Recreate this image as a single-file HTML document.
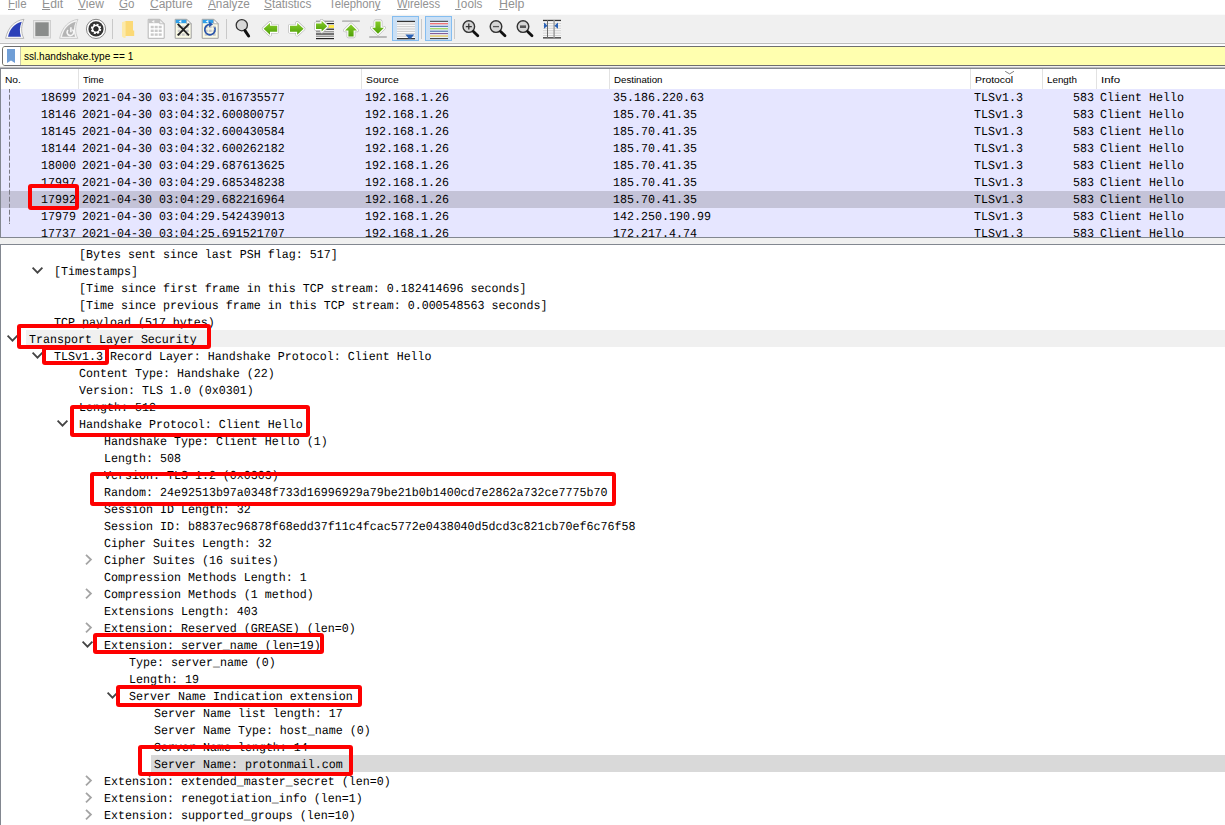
<!DOCTYPE html>
<html lang="en"><head><meta charset="utf-8"><title>Wireshark</title>
<style>
html,body{margin:0;padding:0;overflow:hidden;}
body{width:1225px;height:825px;overflow:hidden;background:#fff;position:relative;font-family:"Liberation Sans", "DejaVu Sans", sans-serif;}
.abs{position:absolute;}
#menubar{left:0;top:0;width:1225px;height:14px;background:#fff;overflow:hidden;}
#menubar span{position:absolute;top:-5px;font-size:12px;line-height:18px;color:#929292;white-space:nowrap;transform-origin:0 50%;}
#menubar u{text-decoration:underline;text-decoration-thickness:1px;text-underline-offset:1px;}
#toolbar{left:0;top:14px;width:1225px;height:32px;background:#f0f0f0;}
#filter{left:2px;top:46px;width:1226px;height:20px;background:#ffffaf;border:1px solid #6e6e6e;box-sizing:border-box;border-radius:3px;}
#filter .bm{position:absolute;left:0;top:0;width:17px;height:18px;background:#fff;border-right:1px solid #c6c6b0;border-radius:2px 0 0 2px;}
#filter .txt{position:absolute;left:21px;top:0;font-size:10px;line-height:19px;color:#000;white-space:nowrap;transform-origin:0 50%;}
#pborder{left:0;top:66px;width:1225px;height:3px;background:linear-gradient(#f0f0f0 0,#f0f0f0 1px,#bcbcbc 1px,#bcbcbc 2px,#828790 2px,#828790 3px);}
#plist{left:0;top:69px;width:1225px;height:169px;background:#e6e6ff;border-left:1px solid #828790;border-bottom:1px solid #828790;box-sizing:border-box;overflow:hidden;}
#phead{position:absolute;left:0;top:0;width:1224px;height:20px;background:#fff;}
#phead span{position:absolute;top:0;font-size:9.6px;line-height:21px;color:#000;white-space:nowrap;transform-origin:0 50%;}
#phead i{position:absolute;top:0;width:1px;height:20px;background:#e2e2e2;}
.prow{position:absolute;left:0;width:1224px;height:17px;font-family:"Liberation Mono", "DejaVu Sans Mono", monospace;font-size:12.2px;line-height:17px;color:#000;white-space:pre;text-rendering:geometricPrecision;}
.prow span{position:absolute;top:1px;transform:scaleX(0.9561);transform-origin:0 50%;}
.prow.sel{background:#c4c3d8;}
#split{left:0;top:238px;width:1225px;height:6px;background:#f0f0f0;}
#details{left:0;top:244px;width:1225px;height:581px;background:#fff;border-left:1px solid #828790;border-top:1px solid #828790;box-sizing:border-box;overflow:hidden;}
.drow{position:absolute;left:0;width:1224px;height:17px;font-family:"Liberation Mono", "DejaVu Sans Mono", monospace;font-size:12.2px;line-height:17px;color:#000;white-space:pre;text-rendering:geometricPrecision;}
.drow span{position:absolute;top:2px;transform:scaleX(0.9561);transform-origin:0 50%;}
.drow svg{position:absolute;top:0;}
.box{position:absolute;border:4px solid #fe0000;border-radius:3px;box-sizing:border-box;}
</style></head><body>
<div id="menubar" class="abs"><span style="left:8.0px;transform:scaleX(0.9568)"><u>F</u>ile</span><span style="left:41.5px;transform:scaleX(1.0156)"><u>E</u>dit</span><span style="left:77.5px;transform:scaleX(0.9996)"><u>V</u>iew</span><span style="left:118.8px;transform:scaleX(0.962)"><u>G</u>o</span><span style="left:149.8px;transform:scaleX(1.0002)"><u>C</u>apture</span><span style="left:207.5px;transform:scaleX(0.9791)"><u>A</u>nalyze</span><span style="left:264.2px;transform:scaleX(0.9852)"><u>S</u>tatistics</span><span style="left:328.8px;transform:scaleX(0.9404)">Telephon<u>y</u></span><span style="left:396.8px;transform:scaleX(0.9369)"><u>W</u>ireless</span><span style="left:455.0px;transform:scaleX(0.9781)"><u>T</u>ools</span><span style="left:498.5px;transform:scaleX(1.0292)"><u>H</u>elp</span></div>
<div id="toolbar" class="abs"><svg class="abs" style="left:0;top:0" width="1225" height="32" viewBox="0 14 1225 32">
<defs>
<linearGradient id="gG" x1="0" y1="0" x2="0" y2="1"><stop offset="0" stop-color="#86cc2a"/><stop offset="1" stop-color="#4fa008"/></linearGradient>
<path id="fin" d="M24 19.3C15 20.5 8 27 5.6 38.4H23.8C20.6 32 21.2 25.5 24 19.3Z"/>
<path id="page" d="M0.5 0.5H12L16.5 5V19.5H0.5Z"/>
<g id="grid" fill="#c9c9c9"><rect x="3" y="7" width="3" height="2.4"/><rect x="7" y="7" width="3" height="2.4"/><rect x="11" y="7" width="3" height="2.4"/><rect x="3" y="10.8" width="3" height="2.4"/><rect x="7" y="10.8" width="3" height="2.4"/><rect x="11" y="10.8" width="3" height="2.4"/><rect x="3" y="14.6" width="3" height="2.4"/><rect x="7" y="14.6" width="3" height="2.4"/><rect x="11" y="14.6" width="3" height="2.4"/></g>
<g id="lens"><circle cx="0" cy="0" r="5.8" fill="#d6d6d6" stroke="#333" stroke-width="1.4"/><path d="M4.6 4.8L9 9.2" stroke="#111" stroke-width="2.8" stroke-linecap="round"/></g>
</defs>
<rect x="0" y="14" width="1225" height="1" fill="#fbfbfb"/>
<rect x="0" y="42" width="1225" height="1" fill="#f4f4f4"/><rect x="0" y="43" width="1225" height="1" fill="#bdbdbd"/><rect x="0" y="44" width="1225" height="2" fill="#fdfdfd"/>
<!-- 1 shark fin -->
<use href="#fin" fill="#fafafa" stroke="#a8a8a8" stroke-width="0.8"/>
<path d="M21.8 21.8C14.5 23.6 9.8 29 8 36.8H21C19.2 32 19.6 26.5 21.8 21.8Z" fill="#2b40b8"/>
<!-- 2 stop -->
<rect x="33.5" y="20.5" width="17" height="17.5" fill="#e9e9e9" stroke="#cfcfcf" stroke-width="1"/>
<rect x="35.3" y="22.3" width="13.4" height="13.8" fill="#8a8c8b"/>
<!-- 3 restart fin -->
<g transform="translate(54,0)"><use href="#fin" fill="#f4f4f4" stroke="#c4c4c4" stroke-width="0.8"/>
<path d="M21.8 21.8C14.5 23.6 9.8 29 8 36.8H21C19.2 32 19.6 26.5 21.8 21.8Z" fill="#b4b4b4"/>
<path d="M14 30A3.3 3.3 0 1 0 18.4 29.6" fill="none" stroke="#f6f6f6" stroke-width="1.7"/><path d="M16.9 27.2V32.2" fill="none" stroke="#f6f6f6" stroke-width="1.6"/></g>
<!-- 4 gear -->
<circle cx="96" cy="28.9" r="9.6" fill="#fff" stroke="#6a6a6a" stroke-width="0.8"/>
<circle cx="96" cy="28.9" r="7.6" fill="#343434"/>
<circle cx="96" cy="28.9" r="4.1" fill="none" stroke="#fff" stroke-width="2.2" stroke-dasharray="1.9 1.32"/>
<circle cx="96" cy="28.9" r="3.4" fill="none" stroke="#fff" stroke-width="1.6"/>
<circle cx="96" cy="28.9" r="2.4" fill="#2a2a2a"/>
<rect x="112" y="19" width="1" height="20" fill="#c9c9c9"/>
<!-- 5 folder -->
<path d="M125 21H133V30.5H134.2V36H125Z" fill="#fbd976"/>
<path d="M122 22.2L125.6 21V37.8L124.2 38L122 36.4Z" fill="#fce9a9"/>
<!-- 6 file grey -->
<g transform="translate(147.7,18.8)"><use href="#page" fill="#fff" stroke="#b5b5b5"/><path d="M1 1H12V4.4H1Z" fill="#c4c4c4"/><path d="M4 2.7L6.6 1.2V4.2Z" fill="#f4f4f4"/><path d="M12 0.5V5H16.5Z" fill="#f2f2f2" stroke="#b5b5b5" stroke-width="0.8"/><use href="#grid"/></g>
<!-- 7 close file -->
<g transform="translate(174.7,18.8)"><use href="#page" fill="#fbfbe6" stroke="#9f9f9f"/><path d="M1 1H12V4.4H1Z" fill="#2f9fe8"/><path d="M4 2.7L6.6 1.2V4.2Z" fill="#fff"/><path d="M12 0.5V5H16.5Z" fill="#fff" stroke="#9f9f9f" stroke-width="0.8"/><use href="#grid"/><path d="M3 5L14.3 16.6M14.3 5L3 16.6" stroke="#222" stroke-width="1.9"/></g>
<!-- 8 reload -->
<g transform="translate(201.7,18.8)"><use href="#page" fill="#fbfbe6" stroke="#9f9f9f"/><path d="M1 1H12V4.4H1Z" fill="#2f9fe8"/><path d="M4 2.7L6.6 1.2V4.2Z" fill="#fff"/><path d="M12 0.5V5H16.5Z" fill="#fff" stroke="#9f9f9f" stroke-width="0.8"/><use href="#grid"/><path d="M13 8.6A5.2 5.2 0 1 1 8 5.6" fill="none" stroke="#2a55aa" stroke-width="1.7"/><path d="M7.4 2.6L11.4 5.4L7.4 8.4Z" fill="#2a55aa"/></g>
<rect x="226" y="19" width="1" height="20" fill="#c9c9c9"/>
<!-- 9 find -->
<g transform="translate(241.8,25.2)"><circle r="5.6" fill="#d8d8d8" stroke="#333" stroke-width="1.3"/><path d="M3.2 5.4L6.8 10.8" stroke="#111" stroke-width="3" stroke-linecap="round"/></g>
<!-- 10 left arrow -->
<path d="M263.6 28.8L270 22.9V25.8H277.2V31.8H270V34.7Z" fill="none" stroke="#b4b4b4" stroke-width="3.6" stroke-linejoin="round"/><path d="M263.6 28.8L270 22.9V25.8H277.2V31.8H270V34.7Z" fill="#fff" stroke="#fff" stroke-width="2.4" stroke-linejoin="round"/><path d="M263.6 28.8L270 22.9V25.8H277.2V31.8H270V34.7Z" fill="url(#gG)"/>
<!-- 11 right arrow -->
<path d="M303.6 28.8L297.2 22.9V25.8H290V31.8H297.2V34.7Z" fill="none" stroke="#b4b4b4" stroke-width="3.6" stroke-linejoin="round"/><path d="M303.6 28.8L297.2 22.9V25.8H290V31.8H297.2V34.7Z" fill="#fff" stroke="#fff" stroke-width="2.4" stroke-linejoin="round"/><path d="M303.6 28.8L297.2 22.9V25.8H290V31.8H297.2V34.7Z" fill="url(#gG)"/>
<!-- 12 goto -->
<g><rect x="316" y="20.6" width="18" height="1.4" fill="#9a9a9a"/><rect x="316" y="23" width="18" height="1.2" fill="#222"/><rect x="326" y="25" width="8" height="3" fill="#ffe94a"/><rect x="316" y="28.6" width="18" height="1.2" fill="#222"/><rect x="316" y="31" width="18" height="1.4" fill="#9a9a9a"/><rect x="316" y="33.4" width="18" height="1.2" fill="#222"/><rect x="316" y="35.6" width="18" height="1.4" fill="#9a9a9a"/><rect x="316" y="38" width="18" height="1.2" fill="#222"/>
<path d="M327.2 26.2L321.6 20.8V23.5H316V28.9H321.6V31.6Z" fill="none" stroke="#b4b4b4" stroke-width="3.6" stroke-linejoin="round"/><path d="M327.2 26.2L321.6 20.8V23.5H316V28.9H321.6V31.6Z" fill="#fff" stroke="#fff" stroke-width="2.4" stroke-linejoin="round"/><path d="M327.2 26.2L321.6 20.8V23.5H316V28.9H321.6V31.6Z" fill="url(#gG)"/></g>
<!-- 13 first -->
<rect x="342" y="20.2" width="18" height="1.9" rx="0.9" fill="#b9b9b9"/>
<path d="M351 24.4L357 30.4H353.6V36.4H348.4V30.4H345Z" fill="none" stroke="#b4b4b4" stroke-width="3.6" stroke-linejoin="round"/><path d="M351 24.4L357 30.4H353.6V36.4H348.4V30.4H345Z" fill="#fff" stroke="#fff" stroke-width="2.4" stroke-linejoin="round"/><path d="M351 24.4L357 30.4H353.6V36.4H348.4V30.4H345Z" fill="url(#gG)"/>
<!-- 14 last -->
<rect x="369" y="36" width="18" height="1.9" rx="0.9" fill="#b9b9b9"/>
<path d="M378 33.8L384 27.8H380.6V21.4H375.4V27.8H372Z" fill="none" stroke="#b4b4b4" stroke-width="3.6" stroke-linejoin="round"/><path d="M378 33.8L384 27.8H380.6V21.4H375.4V27.8H372Z" fill="#fff" stroke="#fff" stroke-width="2.4" stroke-linejoin="round"/><path d="M378 33.8L384 27.8H380.6V21.4H375.4V27.8H372Z" fill="url(#gG)"/>
<!-- 15 autoscroll -->
<rect x="392.5" y="16.5" width="26" height="24" fill="#cbe0f5" stroke="#84bdf0"/>
<rect x="397" y="21" width="18" height="18" fill="#fafafa"/>
<g fill="#cfcfcf"><rect x="397" y="23.6" width="18" height="1.2"/><rect x="397" y="26" width="18" height="1.2"/><rect x="397" y="28.4" width="18" height="1.2"/><rect x="397" y="30.8" width="18" height="1.2"/><rect x="397" y="33.2" width="18" height="1.2"/><rect x="397" y="35.6" width="18" height="1.2"/></g>
<rect x="397" y="20.8" width="18" height="1.3" fill="#333"/><rect x="397" y="38" width="18" height="1.3" fill="#333"/>
<path d="M405.4 34.4H414.2C413.5 36 411.5 36.6 411.2 38.6H408.4C408.1 36.6 406.1 36 405.4 34.4Z" fill="#2b62b6"/>
<rect x="421" y="19" width="1" height="20" fill="#c9c9c9"/>
<!-- 16 colorize -->
<rect x="425.5" y="16.5" width="26" height="24" fill="#cbe0f5" stroke="#84bdf0"/>
<rect x="430" y="21" width="18" height="18" fill="#e9f1fa"/><g><rect x="430" y="20.8" width="18" height="1.1" fill="#4a4a4a"/><rect x="430" y="23.2" width="18" height="1.1" fill="#f0585a"/><rect x="430" y="25.8" width="18" height="1" fill="#3b62a6"/><rect x="430" y="28.2" width="18" height="1.1" fill="#93d24a"/><rect x="430" y="30.7" width="18" height="1" fill="#3b62a6"/><rect x="430" y="33.1" width="18" height="1" fill="#7a4e8e"/><rect x="430" y="35.5" width="18" height="1.1" fill="#e6be3a"/><rect x="430" y="38" width="18" height="1.1" fill="#4a4a4a"/></g>
<rect x="454" y="19" width="1" height="20" fill="#c9c9c9"/>
<!-- 17-19 zoom -->
<use href="#lens" x="468.8" y="26.6"/><path d="M465.8 26.6H471.8M468.8 23.6V29.6" stroke="#333" stroke-width="1.3"/>
<use href="#lens" x="496" y="26.6"/><path d="M493 26.6H499" stroke="#555" stroke-width="1.3"/>
<use href="#lens" x="523" y="26.6"/><rect x="520" y="25.4" width="6" height="2.6" fill="#555"/>
<!-- 20 resize cols -->
<rect x="543" y="20" width="18" height="18" fill="#f6f6f6"/>
<g fill="#d2d2d2"><rect x="543" y="23" width="18" height="1"/><rect x="543" y="25.4" width="18" height="1"/><rect x="543" y="27.8" width="18" height="1"/><rect x="543" y="30.2" width="18" height="1"/><rect x="543" y="32.6" width="18" height="1"/><rect x="543" y="35" width="18" height="1"/></g>
<rect x="543" y="19.8" width="18" height="1.3" fill="#333"/><rect x="543" y="37.2" width="18" height="1.3" fill="#333"/>
<rect x="547" y="20" width="1" height="18" fill="#6a6a6a"/><rect x="553.4" y="20" width="1.4" height="18" fill="#9a9a9a"/>
<path d="M544 22.6V28.8L547.6 25.7Z" fill="#2b62b6"/><path d="M558 22.6V28.8L554.4 25.7Z" fill="#2b62b6"/>
</svg>
</div>
<div id="filter" class="abs"><div class="bm"><svg width="17" height="18" viewBox="0 0 17 18"><path d="M4 2H12V16L8 13.4L4 16Z" fill="#709ed6"/></svg></div><div class="txt" style="transform:scaleX(1.0082)">ssl.handshake.type == 1</div></div>
<div id="pborder" class="abs"></div>
<div id="plist" class="abs"><div id="phead"><span style="left:4.1px;transform:scaleX(1.0643)">No.</span><span style="left:81.9px;transform:scaleX(0.9938)">Time</span><span style="left:364.9px;transform:scaleX(1.0783)">Source</span><span style="left:613.1px;transform:scaleX(1.0098)">Destination</span><span style="left:974.0px;transform:scaleX(1.0819)">Protocol</span><span style="left:1046.1px;transform:scaleX(1.0217)">Length</span><span style="left:1099.6px;transform:scaleX(1.1991)">Info</span><i style="left:77px"></i><i style="left:360px"></i><i style="left:608px"></i><i style="left:969px"></i><i style="left:1041px"></i><i style="left:1095px"></i><svg class="abs" style="left:1003px;top:2px" width="12" height="4" viewBox="0 0 12 4"><path d="M1.2 0.3L5.6 2.9L10 0.3" fill="none" stroke="#707070" stroke-width="0.9"/></svg></div><div class="prow" style="top:20px"><span style="left:40px">18699</span><span style="left:81px">2021-04-30 03:04:35.016735577</span><span style="left:364px">192.168.1.26</span><span style="left:612px">35.186.220.63</span><span style="left:973px">TLSv1.3</span><span style="left:1072px">583</span><span style="left:1099px">Client Hello</span></div><div class="prow" style="top:37px"><span style="left:40px">18146</span><span style="left:81px">2021-04-30 03:04:32.600800757</span><span style="left:364px">192.168.1.26</span><span style="left:612px">185.70.41.35</span><span style="left:973px">TLSv1.3</span><span style="left:1072px">583</span><span style="left:1099px">Client Hello</span></div><div class="prow" style="top:54px"><span style="left:40px">18145</span><span style="left:81px">2021-04-30 03:04:32.600430584</span><span style="left:364px">192.168.1.26</span><span style="left:612px">185.70.41.35</span><span style="left:973px">TLSv1.3</span><span style="left:1072px">583</span><span style="left:1099px">Client Hello</span></div><div class="prow" style="top:71px"><span style="left:40px">18144</span><span style="left:81px">2021-04-30 03:04:32.600262182</span><span style="left:364px">192.168.1.26</span><span style="left:612px">185.70.41.35</span><span style="left:973px">TLSv1.3</span><span style="left:1072px">583</span><span style="left:1099px">Client Hello</span></div><div class="prow" style="top:88px"><span style="left:40px">18000</span><span style="left:81px">2021-04-30 03:04:29.687613625</span><span style="left:364px">192.168.1.26</span><span style="left:612px">185.70.41.35</span><span style="left:973px">TLSv1.3</span><span style="left:1072px">583</span><span style="left:1099px">Client Hello</span></div><div class="prow" style="top:105px"><span style="left:40px">17997</span><span style="left:81px">2021-04-30 03:04:29.685348238</span><span style="left:364px">192.168.1.26</span><span style="left:612px">185.70.41.35</span><span style="left:973px">TLSv1.3</span><span style="left:1072px">583</span><span style="left:1099px">Client Hello</span></div><div class="prow sel" style="top:122px"><span style="left:40px">17992</span><span style="left:81px">2021-04-30 03:04:29.682216964</span><span style="left:364px">192.168.1.26</span><span style="left:612px">185.70.41.35</span><span style="left:973px">TLSv1.3</span><span style="left:1072px">583</span><span style="left:1099px">Client Hello</span></div><div class="prow" style="top:139px"><span style="left:40px">17979</span><span style="left:81px">2021-04-30 03:04:29.542439013</span><span style="left:364px">192.168.1.26</span><span style="left:612px">142.250.190.99</span><span style="left:973px">TLSv1.3</span><span style="left:1072px">583</span><span style="left:1099px">Client Hello</span></div><div class="prow" style="top:156px"><span style="left:40px">17737</span><span style="left:81px">2021-04-30 03:04:25.691521707</span><span style="left:364px">192.168.1.26</span><span style="left:612px">172.217.4.74</span><span style="left:973px">TLSv1.3</span><span style="left:1072px">583</span><span style="left:1099px">Client Hello</span></div><div class="abs" style="left:8px;top:20px;width:1px;height:135px;background:repeating-linear-gradient(180deg,#7a7a84 0,#7a7a84 4.7px,transparent 4.7px,transparent 6.8px);background-position:0 -1.3px;"></div></div>
<div id="split" class="abs"></div>
<div id="details" class="abs"><div class="drow" style="top:0px"><span style="left:78px">[Bytes sent since last PSH flag: 517]</span></div><div class="drow" style="top:17px"><svg style="left:29px" width="15" height="17" viewBox="0 0 15 17"><path d="M2.6 5.7L7.5 10.7L12.4 5.7" fill="none" stroke="#444" stroke-width="1.8"/></svg><span style="left:53px">[Timestamps]</span></div><div class="drow" style="top:34px"><span style="left:78px">[Time since first frame in this TCP stream: 0.182414696 seconds]</span></div><div class="drow" style="top:51px"><span style="left:78px">[Time since previous frame in this TCP stream: 0.000548563 seconds]</span></div><div class="drow" style="top:68px"><span style="left:53px">TCP payload (517 bytes)</span></div><div class="drow" style="top:85px"><div class="abs" style="left:25px;top:0;width:1225px;height:17px;background:#f0f0f0"></div><svg style="left:4px" width="15" height="17" viewBox="0 0 15 17"><path d="M2.6 5.7L7.5 10.7L12.4 5.7" fill="none" stroke="#444" stroke-width="1.8"/></svg><span style="left:28px">Transport Layer Security</span></div><div class="drow" style="top:102px"><svg style="left:29px" width="15" height="17" viewBox="0 0 15 17"><path d="M2.6 5.7L7.5 10.7L12.4 5.7" fill="none" stroke="#444" stroke-width="1.8"/></svg><span style="left:53px">TLSv1.3 Record Layer: Handshake Protocol: Client Hello</span></div><div class="drow" style="top:119px"><span style="left:78px">Content Type: Handshake (22)</span></div><div class="drow" style="top:136px"><span style="left:78px">Version: TLS 1.0 (0x0301)</span></div><div class="drow" style="top:153px"><span style="left:78px">Length: 512</span></div><div class="drow" style="top:170px"><svg style="left:54px" width="15" height="17" viewBox="0 0 15 17"><path d="M2.6 5.7L7.5 10.7L12.4 5.7" fill="none" stroke="#444" stroke-width="1.8"/></svg><span style="left:78px">Handshake Protocol: Client Hello</span></div><div class="drow" style="top:187px"><span style="left:103px">Handshake Type: Client Hello (1)</span></div><div class="drow" style="top:204px"><span style="left:103px">Length: 508</span></div><div class="drow" style="top:221px"><span style="left:103px">Version: TLS 1.2 (0x0303)</span></div><div class="drow" style="top:238px"><span style="left:103px">Random: 24e92513b97a0348f733d16996929a79be21b0b1400cd7e2862a732ce7775b70</span></div><div class="drow" style="top:255px"><span style="left:103px">Session ID Length: 32</span></div><div class="drow" style="top:272px"><span style="left:103px">Session ID: b8837ec96878f68edd37f11c4fcac5772e0438040d5dcd3c821cb70ef6c76f58</span></div><div class="drow" style="top:289px"><span style="left:103px">Cipher Suites Length: 32</span></div><div class="drow" style="top:306px"><svg style="left:79px" width="15" height="17" viewBox="0 0 15 17"><path d="M6 3.9L10.9 8.6L6 13.3" fill="none" stroke="#a4a4a4" stroke-width="1.8"/></svg><span style="left:103px">Cipher Suites (16 suites)</span></div><div class="drow" style="top:323px"><span style="left:103px">Compression Methods Length: 1</span></div><div class="drow" style="top:340px"><svg style="left:79px" width="15" height="17" viewBox="0 0 15 17"><path d="M6 3.9L10.9 8.6L6 13.3" fill="none" stroke="#a4a4a4" stroke-width="1.8"/></svg><span style="left:103px">Compression Methods (1 method)</span></div><div class="drow" style="top:357px"><span style="left:103px">Extensions Length: 403</span></div><div class="drow" style="top:374px"><svg style="left:79px" width="15" height="17" viewBox="0 0 15 17"><path d="M6 3.9L10.9 8.6L6 13.3" fill="none" stroke="#a4a4a4" stroke-width="1.8"/></svg><span style="left:103px">Extension: Reserved (GREASE) (len=0)</span></div><div class="drow" style="top:391px"><svg style="left:79px" width="15" height="17" viewBox="0 0 15 17"><path d="M2.6 5.7L7.5 10.7L12.4 5.7" fill="none" stroke="#444" stroke-width="1.8"/></svg><span style="left:103px">Extension: server_name (len=19)</span></div><div class="drow" style="top:408px"><span style="left:128px">Type: server_name (0)</span></div><div class="drow" style="top:425px"><span style="left:128px">Length: 19</span></div><div class="drow" style="top:442px"><svg style="left:104px" width="15" height="17" viewBox="0 0 15 17"><path d="M2.6 5.7L7.5 10.7L12.4 5.7" fill="none" stroke="#444" stroke-width="1.8"/></svg><span style="left:128px">Server Name Indication extension</span></div><div class="drow" style="top:459px"><span style="left:153px">Server Name list length: 17</span></div><div class="drow" style="top:476px"><span style="left:153px">Server Name Type: host_name (0)</span></div><div class="drow" style="top:493px"><span style="left:153px">Server Name length: 14</span></div><div class="drow" style="top:510px"><div class="abs" style="left:150px;top:0;width:1225px;height:17px;background:#d9d9d9"></div><span style="left:153px">Server Name: protonmail.com</span></div><div class="drow" style="top:527px"><svg style="left:79px" width="15" height="17" viewBox="0 0 15 17"><path d="M6 3.9L10.9 8.6L6 13.3" fill="none" stroke="#a4a4a4" stroke-width="1.8"/></svg><span style="left:103px">Extension: extended_master_secret (len=0)</span></div><div class="drow" style="top:544px"><svg style="left:79px" width="15" height="17" viewBox="0 0 15 17"><path d="M6 3.9L10.9 8.6L6 13.3" fill="none" stroke="#a4a4a4" stroke-width="1.8"/></svg><span style="left:103px">Extension: renegotiation_info (len=1)</span></div><div class="drow" style="top:561px"><svg style="left:79px" width="15" height="17" viewBox="0 0 15 17"><path d="M6 3.9L10.9 8.6L6 13.3" fill="none" stroke="#a4a4a4" stroke-width="1.8"/></svg><span style="left:103px">Extension: supported_groups (len=10)</span></div></div>
<div class="box" style="left:27.7px;top:183.5px;width:51.7px;height:26.9px"></div><div class="box" style="left:16.7px;top:323.5px;width:194.8px;height:25.7px"></div><div class="box" style="left:41.8px;top:345.7px;width:67.2px;height:19.3px"></div><div class="box" style="left:70.3px;top:405.3px;width:239.3px;height:32.0px"></div><div class="box" style="left:89.6px;top:472.3px;width:526.8px;height:33.7px"></div><div class="box" style="left:93.1px;top:633.4px;width:230.6px;height:21.0px"></div><div class="box" style="left:115.5px;top:685.2px;width:246.0px;height:22.0px"></div><div class="box" style="left:137.5px;top:745.2px;width:215.2px;height:30.8px"></div>
</body></html>
